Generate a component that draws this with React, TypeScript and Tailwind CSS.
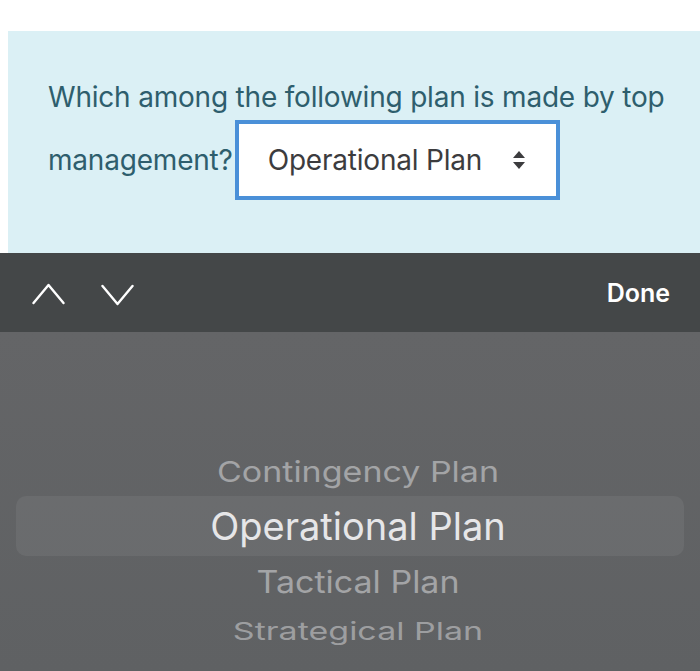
const App = () => {
  return (
    <div className="w-[700px] h-[671px] bg-white overflow-hidden flex flex-col" style={{ fontFamily: "Inter, 'Noto Sans', sans-serif" }}>
      {/* Question panel */}
      <div className="pt-[31px] pl-[8px]">
        <div className="h-[222px] bg-[#dbf0f5] pl-[40px] pt-[41px] text-[#2e5e6d]">
          <div className="h-[50px] flex items-center text-[28px] tracking-[-0.2px]">
            Which among the following plan is made by top
          </div>
          <div className="-mt-[2px] h-[80px] flex items-center">
            <span className="text-[28px] tracking-[-0.2px]">management?</span>
            <div className="ml-[2px] w-[325px] h-[80px] border-[4px] border-[#4a90d8] bg-white flex items-center pl-[29px] pr-[30px]">
              <span className="flex-1 text-[28px] text-[#3c3c3e] tracking-[-0.2px]">Operational Plan</span>
              <svg width="14" height="22" viewBox="0 0 14 22">
                <path d="M7 2 L13 9 H1 Z" fill="#3c3c3e" />
                <path d="M7 20 L13 13 H1 Z" fill="#3c3c3e" />
              </svg>
            </div>
          </div>
        </div>
      </div>

      {/* Keyboard accessory toolbar */}
      <div className="h-[79px] bg-[#444748] flex items-center pl-[32px] pr-[30px] pt-[2px]">
        <svg width="33" height="22" viewBox="0 0 33 22" fill="none" stroke="white" strokeWidth="2.4" strokeLinecap="round" strokeLinejoin="round">
          <path d="M1.5 20 L16.5 2 L31.5 20" />
        </svg>
        <svg width="33" height="22" viewBox="0 0 33 22" fill="none" stroke="white" strokeWidth="2.4" strokeLinecap="round" strokeLinejoin="round" className="ml-[36px] mt-[3px]">
          <path d="M1.5 2 L16.5 20 L31.5 2" />
        </svg>
        <span className="ml-auto text-white text-[25px] font-semibold">Done</span>
      </div>

      {/* Picker wheel */}
      <div className="flex-1 bg-gradient-to-b from-[#646567] to-[#5f6163] pt-[115px] px-[16px]">
        <div className="h-[49px] pl-[16px] flex items-center justify-center text-[34px] text-[#a3a4a6] scale-y-[0.85]">
          Contingency Plan
        </div>
        <div className="h-[60px] pl-[16px] rounded-[10px] bg-white/[0.06] flex items-center justify-center text-[38px] text-[#e6e6e8]">
          Operational Plan
        </div>
        <div className="h-[50px] pl-[16px] flex items-center justify-center text-[34px] text-[#a3a4a6] scale-y-[0.9]">
          Tactical Plan
        </div>
        <div className="h-[50px] pl-[16px] flex items-center justify-center text-[34px] text-[#9d9ea0] scale-y-[0.72]">
          Strategical Plan
        </div>
      </div>
    </div>
  );
};

export default App;
